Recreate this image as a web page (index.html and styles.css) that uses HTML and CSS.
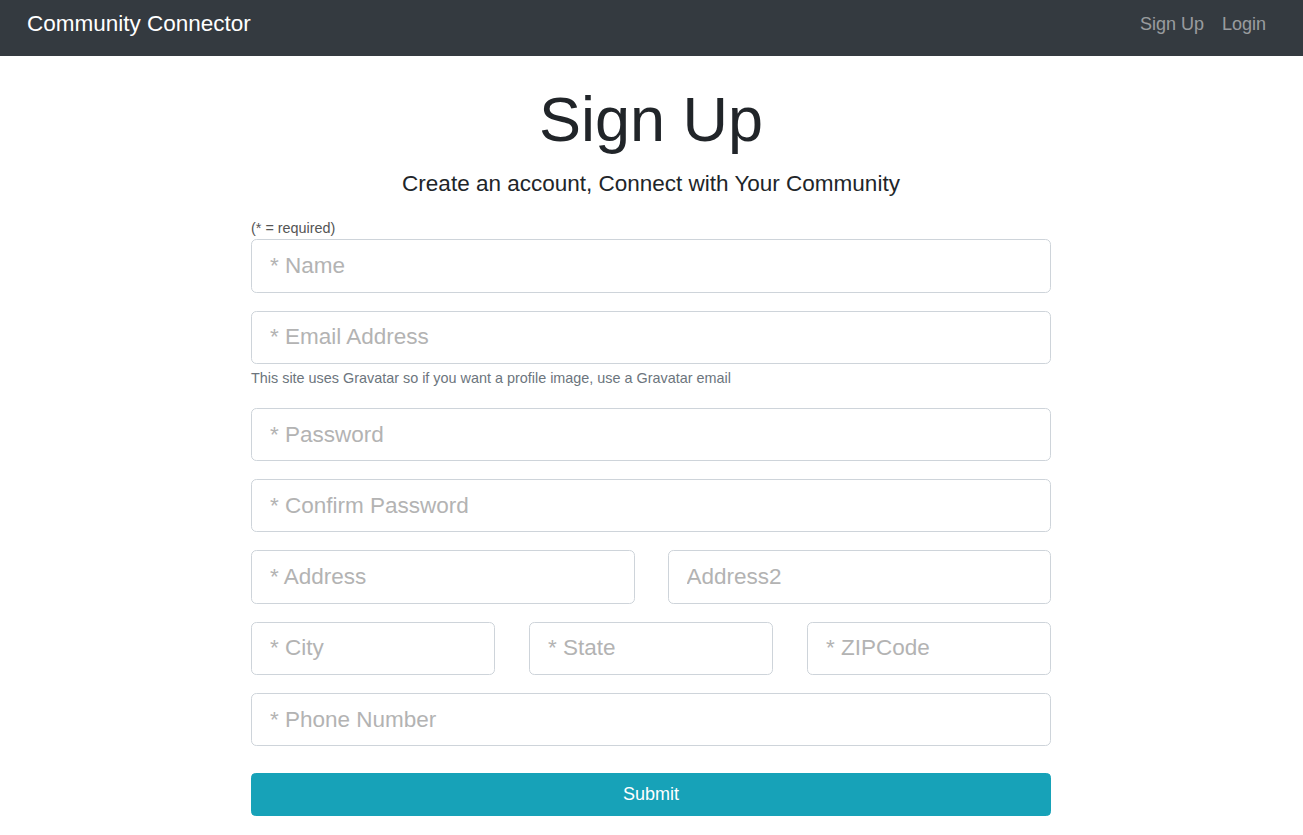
FILE: index.html
```html
<!DOCTYPE html>
<html lang="en">
<head>
<meta charset="utf-8">
<title>Community Connector - Sign Up</title>
<link rel="stylesheet" href="styles.css">
</head>
<body>
<nav class="navbar">
  <a class="brand" href="#">Community Connector</a>
  <div class="nav-links">
    <a class="nav-link" href="#">Sign Up</a>
    <a class="nav-link" href="#">Login</a>
  </div>
</nav>
<main class="container">
  <h1 class="title">Sign Up</h1>
  <p class="lead">Create an account, Connect with Your Community</p>
  <form class="form">
    <small class="note">(* = required)</small>
    <div class="group"><input class="field" type="text" placeholder="* Name"></div>
    <div class="group">
      <input class="field" type="email" placeholder="* Email Address">
      <small class="help">This site uses Gravatar so if you want a profile image, use a Gravatar email</small>
    </div>
    <div class="group"><input class="field" type="password" placeholder="* Password"></div>
    <div class="group"><input class="field" type="password" placeholder="* Confirm Password"></div>
    <div class="group row2">
      <input class="field" type="text" placeholder="* Address">
      <input class="field" type="text" placeholder="Address2">
    </div>
    <div class="group row3">
      <input class="field" type="text" placeholder="* City">
      <input class="field" type="text" placeholder="* State">
      <input class="field" type="text" placeholder="* ZIPCode">
    </div>
    <div class="group"><input class="field" type="tel" placeholder="* Phone Number"></div>
    <button class="submit" type="submit">Submit</button>
  </form>
</main>
</body>
</html>
```
FILE: styles.css
```css
html { font-size: 18px; }
* { box-sizing: border-box; }
body {
  margin: 0;
  font-family: "Liberation Sans", Arial, Helvetica, sans-serif;
  font-size: 1rem;
  line-height: 1.5;
  color: #212529;
  background: #fff;
}
.navbar {
  height: 56px;
  background: #343a40;
  display: flex;
  justify-content: space-between;
  align-items: flex-start;
  padding: 7px 28px 0 27px;
}
.brand {
  color: #fff;
  text-decoration: none;
  font-size: 22.5px;
  line-height: 34px;
}
.nav-links { display: flex; }
.nav-link {
  color: rgba(255,255,255,.5);
  text-decoration: none;
  font-size: 18px;
  line-height: 34px;
  padding: 0 9px;
}
.container {
  width: 801px;
  margin: 0 auto;
  padding: 26px 1px 0 0;
}
.title {
  margin: 0 0 9px;
  text-align: center;
  font-size: 63px;
  font-weight: 300;
  line-height: 1.2;
}
.lead {
  margin: 0 0 18px;
  text-align: center;
  font-size: 22.5px;
  font-weight: 300;
}
.form { display: block; }
.note {
  display: block;
  font-size: 14.4px;
  line-height: 21px;
  color: #555;
}
.group { margin-bottom: 18px; }
.field {
  display: block;
  width: 100%;
  height: 53.25px;
  padding: 9px 18px;
  font-family: inherit;
  font-size: 22.5px;
  line-height: 1.5;
  color: #495057;
  background: #fff;
  border: 1px solid #ced4da;
  border-radius: 5.4px;
  outline: none;
}
.field::placeholder { color: #b3b3b3; opacity: 1; }
.help {
  display: block;
  margin-top: 4.5px;
  font-size: 14.4px;
  line-height: 21.6px;
  color: #6c757d;
}
.row2 {
  display: grid;
  grid-template-columns: 1fr 1fr;
  column-gap: 33px;
}
.row3 {
  display: grid;
  grid-template-columns: 1fr 1fr 1fr;
  column-gap: 34px;
}
.submit {
  display: block;
  width: 100%;
  height: 43px;
  margin-top: 27px;
  padding: 0;
  font-family: inherit;
  font-size: 18px;
  color: #fff;
  background: #17a2b8;
  border: 1px solid #17a2b8;
  border-radius: 4.5px;
  cursor: pointer;
}
```
